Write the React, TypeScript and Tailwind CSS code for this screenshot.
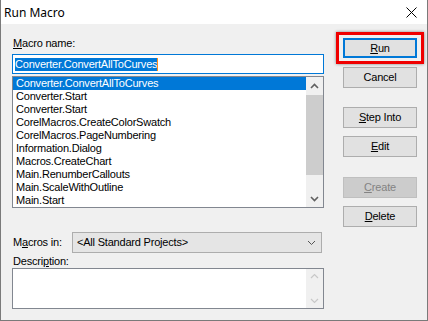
const macros = [
  "Converter.ConvertAllToCurves",
  "Converter.Start",
  "Converter.Start",
  "CorelMacros.CreateColorSwatch",
  "CorelMacros.PageNumbering",
  "Information.Dialog",
  "Macros.CreateChart",
  "Main.RenumberCallouts",
  "Main.ScaleWithOutline",
  "Main.Start",
];

function Chevron({ up, color, width = 1.6 }: { up?: boolean; color: string; width?: number }) {
  return (
    <svg width="9" height="6" viewBox="0 0 9 6" className="block">
      <polyline
        points={up ? "1,5 4.5,1.5 8,5" : "1,1 4.5,4.5 8,1"}
        fill="none"
        stroke={color}
        strokeWidth={width}
      />
    </svg>
  );
}

// label with an underlined mnemonic letter
function Mn({ pre = "", k, post }: { pre?: string; k: string; post: string }) {
  return (
    <>
      {pre}
      <span className="underline underline-offset-[1px]">{k}</span>
      {post}
    </>
  );
}

function DlgButton({
  children,
  disabled,
  className = "",
}: {
  children: React.ReactNode;
  disabled?: boolean;
  className?: string;
}) {
  return (
    <button
      type="button"
      className={
        "ml-[7px] flex h-[21px] w-[74px] items-center justify-center border " +
        (disabled
          ? "border-[#bfbfbf] bg-[#cccccc] text-[#838383]"
          : "border-[#adadad] bg-[#e1e1e1] text-black") +
        " " +
        className
      }
    >
      {children}
    </button>
  );
}

export default function App() {
  return (
    <div className="flex h-[321px] w-[428px] flex-col border-x border-b border-[#7a7a7a] bg-[#f0f0f0] font-['Liberation_Sans',Arial,sans-serif] text-[11px] leading-[13px] tracking-[-0.2px] text-black">
      {/* title bar */}
      <div className="flex h-[24px] shrink-0 items-center justify-between bg-white pl-[3px] pr-[10px]">
        <span className="font-['Noto_Sans',sans-serif] text-[12px] tracking-normal">Run Macro</span>
        <svg width="11" height="11" viewBox="0 0 11 11">
          <path d="M0.5 0.5 L10.5 10.5 M10.5 0.5 L0.5 10.5" stroke="#000" strokeWidth="1" />
        </svg>
      </div>

      <div className="flex flex-1">
        {/* left column */}
        <div className="ml-[11px] flex w-[312px] flex-col">
          <div className="mt-[13px] h-[13px] pl-[1px]">
            <Mn k="M" post="acro name:" />
          </div>
          <div className="mt-[4px] flex h-[20px] items-center border border-[#0078d7] bg-white pl-[2px]">
            <span className="relative bg-[#0078d7] pr-[1px] text-white">
              Converter.ConvertAllToCurves
              <span className="absolute right-0 top-0 h-full w-[1px] bg-[#ff8c1a]" />
            </span>
          </div>
          <div className="mt-[2px] flex h-[132px] border border-[#828790] bg-white">
            <div className="flex-1">
              {macros.map((m, i) => (
                <div
                  key={i}
                  className={
                    "h-[13px] pl-[3px] " + (i === 0 ? "bg-[#0078d7] text-white" : "")
                  }
                >
                  {m}
                </div>
              ))}
            </div>
            <div className="flex w-[17px] flex-col bg-[#f0f0f0]">
              <div className="flex h-[17px] items-center justify-center">
                <Chevron up color="#606060" />
              </div>
              <div className="mt-[1px] h-[80px] bg-[#cdcdcd]" />
              <div className="flex-1" />
              <div className="flex h-[17px] items-center justify-center">
                <Chevron color="#606060" />
              </div>
            </div>
          </div>

          <div className="mt-[24px] flex items-center">
            <div className="w-[60px] pl-[1px]">
              <Mn pre="M" k="a" post="cros in:" />
            </div>
            <div className="flex h-[21px] w-[250px] items-center justify-between border border-[#adadad] bg-[#e5e5e5] pl-[4px] pr-[5px]">
              <span>&lt;All Standard Projects&gt;</span>
              <Chevron color="#555" width={1} />
            </div>
          </div>
          <div className="mt-[2px] h-[13px] pl-[1px]">
            <Mn pre="Descri" k="p" post="tion:" />
          </div>
          <div className="flex h-[41px] border border-[#828790] bg-white">
            <div className="flex-1" />
            <div className="flex w-[17px] flex-col justify-between bg-[#f0f0f0] py-[4px]">
              <div className="flex justify-center">
                <Chevron up color="#c8c8c8" width={1.2} />
              </div>
              <div className="flex justify-center">
                <Chevron color="#c8c8c8" width={1.2} />
              </div>
            </div>
          </div>
        </div>

        {/* right column: buttons */}
        <div className="ml-[12px] flex flex-col pt-[8px]">
          <div className="h-[32px] w-[88px] border-[3px] border-[#f00000] px-[4px] py-[3px] shadow-[0_0_3px_rgba(0,0,0,0.45)]">
            <button
              type="button"
              className="flex h-[20px] w-[74px] items-center justify-center border-2 border-[#0078d7] bg-[#e1e1e1]"
            >
              <Mn k="R" post="un" />
            </button>
          </div>
          <DlgButton className="mt-[3px]">Cancel</DlgButton>
          <DlgButton className="mt-[19px]">
            <Mn k="S" post="tep Into" />
          </DlgButton>
          <DlgButton className="mt-[8px]">
            <Mn k="E" post="dit" />
          </DlgButton>
          <DlgButton disabled className="mt-[20px]">
            <Mn k="C" post="reate" />
          </DlgButton>
          <DlgButton className="mt-[8px]">
            <Mn k="D" post="elete" />
          </DlgButton>
        </div>
      </div>
    </div>
  );
}
